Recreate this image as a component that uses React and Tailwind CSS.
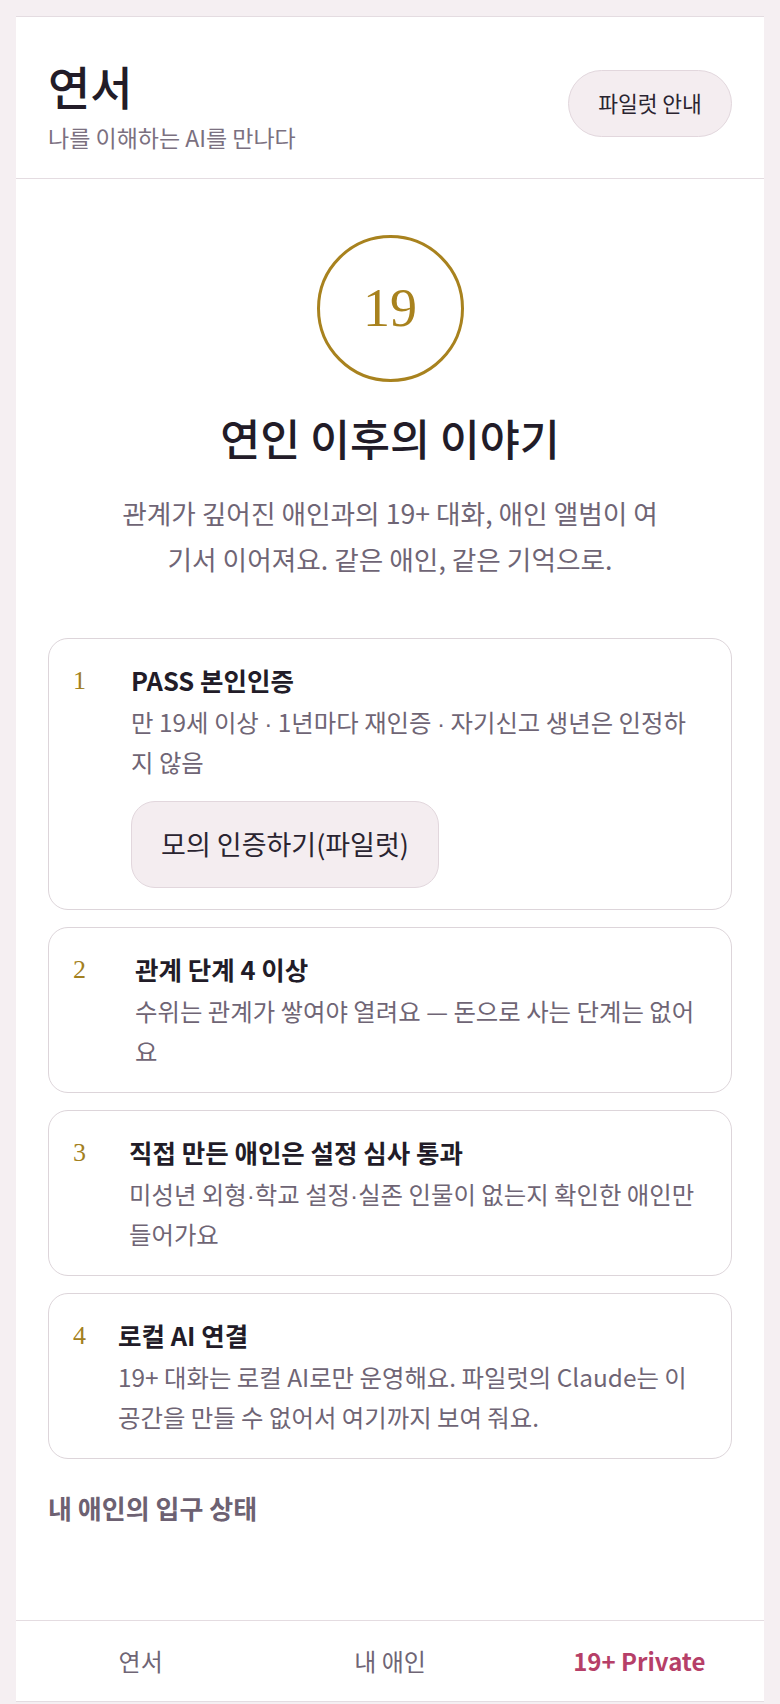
import React from "react";

const sans = { fontFamily: '"Noto Sans CJK KR", "Noto Sans", sans-serif' };

const Dot = () => (
  <span className="leading-none" style={{ fontFamily: '"Liberation Sans", sans-serif' }}>·</span>
);

const steps = [
  {
    n: "1",
    w: "w-[58px]",
    title: "PASS 본인인증",
    lines: [
      <>만 19세 이상 <Dot /> 1년마다 재인증 <Dot /> 자기신고 생년은 인정하</>,
      "지 않음",
    ],
    button: true,
  },
  {
    n: "2",
    w: "w-[62px]",
    title: "관계 단계 4 이상",
    lines: ["수위는 관계가 쌓여야 열려요 — 돈으로 사는 단계는 없어", "요"],
  },
  {
    n: "3",
    w: "w-[56px]",
    title: "직접 만든 애인은 설정 심사 통과",
    lines: [
      <>미성년 외형<Dot />학교 설정<Dot />실존 인물이 없는지 확인한 애인만</>,
      "들어가요",
    ],
  },
  {
    n: "4",
    w: "w-[45px]",
    title: "로컬 AI 연결",
    lines: ["19+ 대화는 로컬 AI로만 운영해요. 파일럿의 Claude는 이", "공간을 만들 수 없어서 여기까지 보여 줘요."],
  },
];

function StepCard({ s }) {
  return (
    <div className="rounded-[20px] border-[1.5px] border-[#ddd5da] bg-white pl-[24px] pr-4 pt-[23px] pb-[21px] flex">
      <div className={`${s.w} shrink-0 text-[26px] leading-[38px] text-[#a38020]`} style={{ fontFamily: '"Liberation Serif", serif' }}>
        {s.n}
      </div>
      <div className="flex-1 min-w-0">
        <div className="text-[25.5px] leading-[36px] font-bold text-[#221c28] whitespace-nowrap">{s.title}</div>
        <div className="mt-[4px] text-[24.4px] leading-[40px] text-[#6f6575]">
          {s.lines.map((l, i) => (
            <div key={i} className="h-[40px] whitespace-nowrap">{l}</div>
          ))}
        </div>
        {s.button && (
          <button className="mt-[19px] w-[308px] h-[87px] rounded-[24px] border-[1.5px] border-[#e2d7dd] bg-[#f4edf0] text-[27px] text-[#2a2430]">
            모의 인증하기(파일럿)
          </button>
        )}
      </div>
    </div>
  );
}

export default function App() {
  return (
    <div className="min-h-[1704px] bg-[#f5eff2] px-4 pt-4 pb-[2px]" style={sans}>
      <div className="h-[1686px] bg-white border-t-[1.5px] border-b-[1.5px] border-[#e4dce1] flex flex-col">
        {/* Header */}
        <header className="flex items-center justify-between pl-8 pr-8 pt-[41px] pb-[26px] border-b-[1.5px] border-[#e4dce1]">
          <div>
            <h1 className="text-[46px] leading-[54px] font-medium text-[#221c28]">연서</h1>
            <p className="mt-[10px] text-[23px] leading-[30px] text-[#7b7080]">나를 이해하는 AI를 만나다</p>
          </div>
          <button className="w-[164px] h-[67px] rounded-full border-[1.5px] border-[#e2d7dd] bg-[#f4edf0] text-[21.5px] text-[#2a2430] -mt-[4px]">
            파일럿 안내
          </button>
        </header>

        {/* Main */}
        <main className="flex-1 px-8 pt-[56px]">
          <div className="flex flex-col items-center">
            <div className="w-[147px] h-[147px] rounded-full border-[3.5px] border-[#a8821e] flex items-center justify-center">
              <span className="text-[54px] leading-none text-[#a8821e] -mt-[2px]" style={{ fontFamily: '"Liberation Serif", serif' }}>
                19
              </span>
            </div>
            <h2 className="mt-[28px] text-[43.5px] leading-[56px] font-medium text-[#221c28]">연인 이후의 이야기</h2>
            <p className="mt-[24px] text-[26.7px] leading-[46px] text-[#6f6575] text-center">
              <span className="block whitespace-nowrap">관계가 깊어진 애인과의 19+ 대화, 애인 앨범이 여</span>
              <span className="block whitespace-nowrap">기서 이어져요. 같은 애인, 같은 기억으로.</span>
            </p>
          </div>

          <div className="mt-[56px] flex flex-col gap-[17px]">
            {steps.map((s) => (
              <StepCard key={s.n} s={s} />
            ))}
          </div>

          <h3 className="mt-[31px] text-[26px] leading-[36px] font-bold text-[#6d6172]">내 애인의 입구 상태</h3>
        </main>

        {/* Bottom nav */}
        <nav className="h-[81px] border-t-[1.5px] border-[#e4dce1] grid grid-cols-3 items-center text-[24px]">
          <div className="text-center text-[#6f6575]">연서</div>
          <div className="text-center text-[#6f6575]">내 애인</div>
          <div className="text-center font-bold text-[#b63f68]">19+ Private</div>
        </nav>
      </div>
    </div>
  );
}
